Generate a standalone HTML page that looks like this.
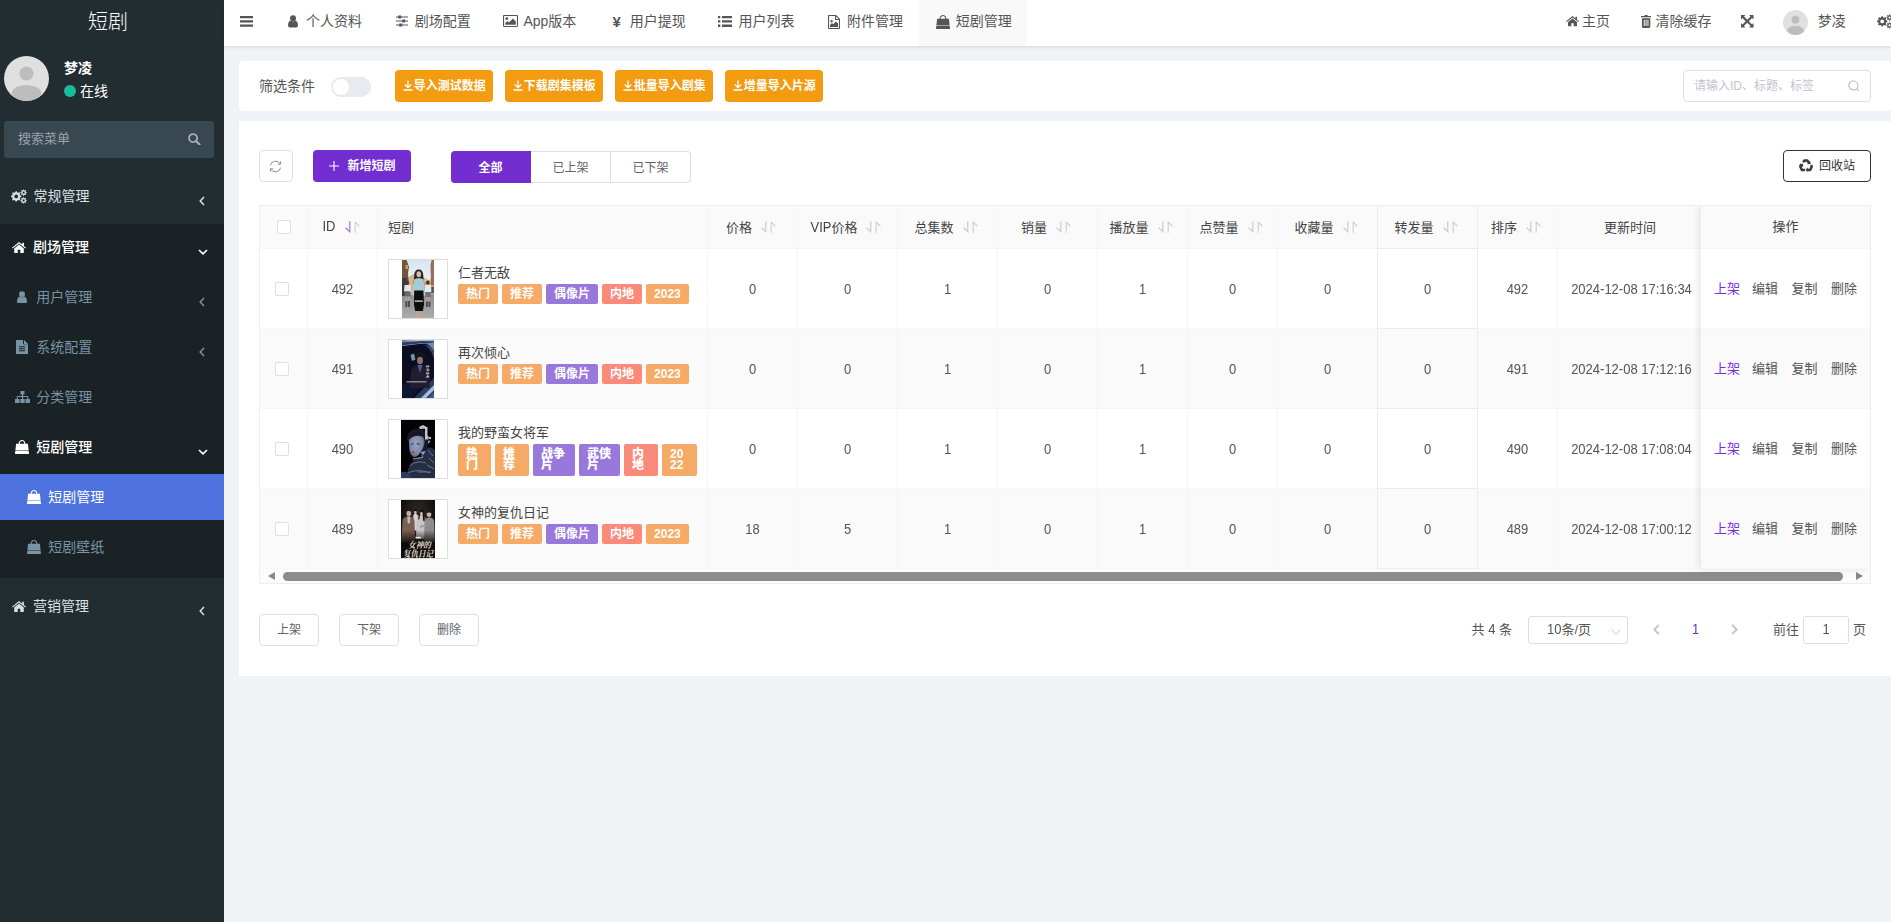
<!DOCTYPE html>
<html lang="zh-CN">
<head>
<meta charset="utf-8">
<title>短剧</title>
<style>
*{box-sizing:border-box;margin:0;padding:0}
html,body{width:1891px;height:922px;overflow:hidden}
body{font-family:"Liberation Sans","Noto Sans CJK SC",sans-serif;font-size:14px;color:#555;background:#f0f3f6;position:relative}
svg{display:block}
/* sidebar */
#side{position:absolute;left:0;top:0;width:224px;height:922px;background:#222d32;color:#d8e0e4}
#logo{position:absolute;left:0;top:0;width:216px;height:46px;line-height:44px;text-align:center;font-size:20px;color:#fff;font-weight:300}
#avatar{position:absolute;left:4px;top:56px;width:45px;height:45px}
#uname{position:absolute;left:64px;top:58px;font-size:14px;font-weight:bold;color:#fff;line-height:20px}
#ustat{position:absolute;left:64px;top:81px;font-size:14px;color:#fff;line-height:20px}
#ustat i{display:inline-block;width:12px;height:12px;border-radius:50%;background:#18bc9c;vertical-align:-1px;margin-right:4px}
#sform{position:absolute;left:4px;top:121px;width:210px;height:37px;border-radius:3px;background:#374850;color:#9aa3a8;font-size:13px;line-height:36px;padding-left:14px}
#sform .sic{position:absolute;left:184px;top:11.500px;color:#a8adb0}
.mi{position:absolute;left:0;width:224px;height:46px;line-height:47px;font-size:14px;white-space:nowrap}
.mi .ic{position:absolute;top:0;height:46px;display:flex;align-items:center}
.mi .tx{position:absolute;top:0}
.mi .ar{position:absolute;top:0;height:46px;display:flex;align-items:center}
.mi.sub{color:#7893a3}
.mi.on,.mi.on2{color:#fff;font-weight:500}
.mi.on2{font-weight:normal}
#dark{position:absolute;left:0;top:224px;width:224px;height:354px;background:#1a2226}
#blue{position:absolute;left:0;top:474px;width:224px;height:46px;background:#4e73df}
/* header */
#head{position:absolute;left:224px;top:0;width:1667px;height:46px;background:#fff;box-shadow:0 1px 3px rgba(0,21,41,.13);color:#555}
.tab{position:absolute;top:0;height:46px;line-height:43px;font-size:14px;white-space:nowrap}
.tab .fi{position:absolute;left:15px;top:0;width:18px;height:46px;display:flex;align-items:center;justify-content:center;padding-bottom:3px}
.tab .tt{position:absolute;left:37px;top:0}
.yen{font-size:15px;font-weight:bold;line-height:1}
#tabon{position:absolute;left:695px;top:0;width:108px;height:46px;background:#f9f9f9}
.hi{position:absolute;top:0;height:43px;display:flex;align-items:center}
.ht{position:absolute;top:0;line-height:43px;white-space:nowrap}
/* cards */
.card{position:absolute;background:#fff}
.obtn{position:absolute;top:9px;width:98px;height:32px;border-radius:4px;background:#f39c12;color:#fff;font-size:12px;font-weight:bold;line-height:33px;white-space:nowrap}
.obtn svg{position:absolute;left:8px;top:10px}
.obtn span{position:absolute;left:18.800px;top:0}
.flabel{position:absolute;left:20px;top:0;line-height:51px;font-size:14px;color:#555}
.sw{position:absolute;left:92px;top:16px;width:40px;height:20px;border-radius:10px;background:#e8eaef;border:1px solid #e8eaef}
.sw i{position:absolute;left:1px;top:1px;width:16px;height:16px;border-radius:50%;background:#fff}
.sinput{position:absolute;left:1444px;top:9px;width:188px;height:32px;border:1px solid #dcdfe6;border-radius:4px;font-size:12px;color:#c0c4cc;line-height:30px;padding-left:10px;white-space:nowrap}
.sinput svg{position:absolute;left:164px;top:9px}
.rbtn{position:absolute;left:20px;top:29px;width:34px;height:32px;border:1px solid #dcdfe6;border-radius:4px}
.rbtn svg{position:absolute;left:9px;top:9px}
.pbtn{position:absolute;left:74px;top:29px;width:98px;height:32px;border-radius:4px;background:#722ed1;color:#fff;font-size:12px;font-weight:bold;line-height:33px;white-space:nowrap}
.pbtn svg{position:absolute;left:16px;top:11px}
.pbtn span{position:absolute;left:34.500px;top:0}
.rg{position:absolute;left:212px;top:30px;width:240px;height:32px;font-size:12px;white-space:nowrap}
.rg span{position:absolute;top:0;width:80px;height:32px;line-height:32px;text-align:center;color:#606266;border:1px solid #dcdfe6;border-left:0;background:#fff}
.rg span.on{background:#722ed1;color:#fff;font-weight:bold;border-color:#722ed1;border-radius:4px 0 0 4px;line-height:33px}
.rg span.last{border-radius:0 4px 4px 0}
.recy{position:absolute;left:1544px;top:29px;width:88px;height:32px;border:1px solid #333;border-radius:4px;font-size:12px;color:#333;line-height:30px;white-space:nowrap}
.recy svg{position:absolute;left:15px;top:8px}
.recy span{position:absolute;left:35px;top:0}
#tb{position:absolute;left:20px;top:84px;width:1612px;height:379px;border:1px solid #ebeef5;overflow:hidden;font-size:13px;color:#555}
.tr{position:absolute;left:0;width:1610px;background:#fff}
.tr.th,.tr.st,.fr.th,.fr.st{background:#fafafa}
.td{position:absolute;top:0;height:100%;padding-top:1px;border-right:1px solid #f5f5f7;border-bottom:1px solid #f6f6f8;display:flex;align-items:center;justify-content:center;white-space:nowrap}
.td.l{justify-content:flex-start}
.th .td{color:#444;padding-bottom:2px;padding-right:3px}
.th .td.l{padding-right:0}
.td.hl{border-right-color:#e9ecf5;border-bottom-color:#e9ecf5;box-shadow:-1px 0 0 #e9ecf5}
.so{margin-left:9px;margin-top:1px}
.cb{display:block;width:14px;height:14px;border:1px solid #dcdfe6;border-radius:2px;background:#fff}
.pic{position:absolute;left:10px;top:10px;width:60px;height:60px;border:1px solid #ddd;background:#fff;display:flex;justify-content:center;align-items:center}
.ttl{position:absolute;left:80px;top:15px;line-height:18px;font-size:13px;color:#444}
.tags{position:absolute;left:80px;top:35px;display:flex}
.tag{display:block;height:20px;line-height:21px;padding:0 8px;margin-right:4px;border-radius:2px;color:#fff;font-size:12px;font-weight:bold}
.tag.w{height:32px;line-height:11px;padding:5px 0 0 8px;margin-right:4px}
.tag.w b{display:block}
.to{background:#f5aa67}.tp{background:#9878db}.ts{background:#fa8a7a}
.sbar{position:absolute;left:0;top:363px;width:1610px;height:14px;background:#fcfcfc}
.sbar .thumb{position:absolute;left:23px;top:3px;width:1560px;height:9px;border-radius:5px;background:#8c8c8c}
.sbar .al{position:absolute;left:8px;top:3px;border:4.500px solid transparent;border-right:7.500px solid #888;border-left:0}
.sbar .arr{position:absolute;left:1596px;top:3px;border:4.500px solid transparent;border-left:7.500px solid #888;border-right:0}
#fx{position:absolute;left:1441px;top:0;width:169px;height:363px;box-shadow:-2px 0 8px rgba(0,0,0,.10);background:#fff}
.fr{position:absolute;left:0;width:169px;background:#fff;border-bottom:1px solid #f6f6f8;font-size:13px}
.fr .c{position:absolute;left:0;width:169px;text-align:center;line-height:42px;color:#444}
.fr a{position:absolute;top:0;line-height:79px;color:#555}
.fr a.p{color:#7433d6}
.bbtn{position:absolute;top:493px;width:60px;height:32px;border:1px solid #dcdfe6;border-radius:4px;font-size:12px;color:#606266;text-align:center;line-height:30px}
.pg{position:absolute;left:0;top:495px;width:1652px;height:28px;font-size:13px;color:#555}
.pt{position:absolute;top:0;line-height:27px;white-space:nowrap}
.psel{position:absolute;top:0;width:100px;height:28px;border:1px solid #dcdfe6;border-radius:3px;line-height:26px}
.psel>span{position:absolute;left:18px;top:0}
.psel svg{position:absolute;left:82px;top:12px}
.pa{position:absolute;top:8px}
.pn{position:absolute;top:0;width:30px;text-align:center;line-height:27px;color:#722ed1}
.pin{position:absolute;top:0;width:46px;height:28px;border:1px solid #dcdfe6;border-radius:3px;text-align:center;line-height:26px}
.n{display:inline-block;transform:scaleY(1.1);transform-origin:50% 58%}

</style>
</head>
<body>

<div id="side">
<div id="dark"></div><div id="blue"></div>
<div id="logo">短剧</div>
<div id="avatar"><svg width="45" height="45" viewBox="0 0 45 45"><circle cx="22.500" cy="22.500" r="22.500" fill="#e0e0e0"/><circle cx="22.500" cy="17.500" r="7" fill="#bdbdbd"/><path d="M7.500 38.500c0-6 6-9.500 15-9.500s15 3.500 15 9.500c-4 4-9 6.500-15 6.500s-11-2.500-15-6.500z" fill="#bdbdbd"/></svg></div>
<div id="uname">梦凌</div>
<div id="ustat"><i></i>在线</div>
<div id="sform">搜索菜单<span class="sic"><svg width="12.5" height="12.5" viewBox="0 0 13 13" style=""><circle cx="5.300" cy="5.300" r="4.200" fill="none" stroke="currentColor" stroke-width="1.900"/><path d="M8.300 8.300l3.700 3.700" stroke="currentColor" stroke-width="2.200" stroke-linecap="round"/></svg></span></div>
<div class="mi " style="top:173px"><span class="ic" style="left:11px"><svg width="16" height="15.0" viewBox="0 0 16 15" style=""><path fill-rule="evenodd" fill="currentColor" d="M10.37 6.83 L10.37 7.97 L9.01 8.61 L8.75 9.24 L9.26 10.65 L8.45 11.46 L7.04 10.95 L6.41 11.21 L5.77 12.57 L4.63 12.57 L3.99 11.21 L3.36 10.95 L1.95 11.46 L1.14 10.65 L1.65 9.24 L1.39 8.61 L0.03 7.97 L0.03 6.83 L1.39 6.19 L1.65 5.56 L1.14 4.15 L1.95 3.34 L3.36 3.85 L3.99 3.59 L4.63 2.23 L5.77 2.23 L6.41 3.59 L7.04 3.85 L8.45 3.34 L9.26 4.15 L8.75 5.56 L9.01 6.19Z M3.30 7.40 a1.90 1.90 0 1 0 3.80 0 a1.90 1.90 0 1 0 -3.80 0Z M15.78 3.25 L15.78 3.95 L14.79 4.29 L14.64 4.66 L15.10 5.60 L14.60 6.10 L13.66 5.64 L13.29 5.79 L12.95 6.78 L12.25 6.78 L11.91 5.79 L11.54 5.64 L10.60 6.10 L10.10 5.60 L10.56 4.66 L10.41 4.29 L9.42 3.95 L9.42 3.25 L10.41 2.91 L10.56 2.54 L10.10 1.60 L10.60 1.10 L11.54 1.56 L11.91 1.41 L12.25 0.42 L12.95 0.42 L13.29 1.41 L13.66 1.56 L14.60 1.10 L15.10 1.60 L14.64 2.54 L14.79 2.91Z M11.50 3.60 a1.10 1.10 0 1 0 2.20 0 a1.10 1.10 0 1 0 -2.20 0Z M15.78 11.05 L15.78 11.75 L14.79 12.09 L14.64 12.46 L15.10 13.40 L14.60 13.90 L13.66 13.44 L13.29 13.59 L12.95 14.58 L12.25 14.58 L11.91 13.59 L11.54 13.44 L10.60 13.90 L10.10 13.40 L10.56 12.46 L10.41 12.09 L9.42 11.75 L9.42 11.05 L10.41 10.71 L10.56 10.34 L10.10 9.40 L10.60 8.90 L11.54 9.36 L11.91 9.21 L12.25 8.22 L12.95 8.22 L13.29 9.21 L13.66 9.36 L14.60 8.90 L15.10 9.40 L14.64 10.34 L14.79 10.71Z M11.50 11.40 a1.10 1.10 0 1 0 2.20 0 a1.10 1.10 0 1 0 -2.20 0Z"/></svg></span><span class="tx" style="left:33.5px">常规管理</span><span class="ar" style="left:199px;padding-top:9px"><svg width="6" height="10" viewBox="0 0 6 10" style=""><path d="M5 1L1.200 5 5 9" fill="none" stroke="currentColor" stroke-width="1.500"/></svg></span></div>
<div class="mi on" style="top:224px"><span class="ic" style="left:12px"><svg width="14" height="11.0" viewBox="0 0 14 11" style=""><path fill="currentColor" d="M7 0L0 5.700l.7.900L7 1.500l6.300 5.100.7-.9-2.100-1.700V.7h-1.700v1.900z"/><path fill="currentColor" d="M7 2.600L2.200 6.500v4c0 .3.200.5.500.5h3V7.700h2.600V11h3c.3 0 .5-.2.500-.5v-4z"/></svg></span><span class="tx" style="left:33px">剧场管理</span><span class="ar" style="left:198px;padding-top:9px"><svg width="10" height="6" viewBox="0 0 10 6" style=""><path d="M1 1l4 3.800L9 1" fill="none" stroke="currentColor" stroke-width="1.700"/></svg></span></div>
<div class="mi sub" style="top:274px"><span class="ic" style="left:17px"><svg width="10.0" height="12.5" viewBox="0 0 10 12.5" style=""><circle cx="5" cy="3.300" r="3" fill="currentColor"/><path d="M0 10.600c0-3.200 1.200-5 2.800-5.200.6.600 1.300.9 2.200.9s1.600-.3 2.200-.9c1.600.2 2.800 2 2.800 5.200 0 1.100-.8 1.900-1.800 1.900H1.800C.8 12.500 0 11.700 0 10.600z" fill="currentColor"/></svg></span><span class="tx" style="left:36.2px">用户管理</span><span class="ar" style="left:199px;padding-top:9px"><svg width="6" height="10" viewBox="0 0 6 10" style=""><path d="M5 1L1.200 5 5 9" fill="none" stroke="currentColor" stroke-width="1.500"/></svg></span></div>
<div class="mi sub" style="top:324px"><span class="ic" style="left:16px"><svg width="12.0" height="14" viewBox="0 0 12 14" style=""><path fill-rule="evenodd" fill="currentColor" d="M0 .6C0 .3.300 0 .6 0H7v3.600c0 .4.300.7.700.7H12v9.100c0 .3-.3.600-.6.600H.6c-.3 0-.6-.3-.6-.6zM8 0.100c.2.100.4.200.5.300l3.100 3.100c.1.100.2.300.3.500H8zM3 6.200h6v1H3zM3 8.200h6v1H3zM3 10.200h6v1H3z"/></svg></span><span class="tx" style="left:36.2px">系统配置</span><span class="ar" style="left:199px;padding-top:9px"><svg width="6" height="10" viewBox="0 0 6 10" style=""><path d="M5 1L1.200 5 5 9" fill="none" stroke="currentColor" stroke-width="1.500"/></svg></span></div>
<div class="mi sub" style="top:374px"><span class="ic" style="left:14.5px"><svg width="15" height="12.0" viewBox="0 0 15 12" style=""><path fill="currentColor" d="M5.500 0h4v3.500h-1.400v1.500h4.400c.4 0 .8.300.8.800V8h1.700v4h-4.500V8h1.700V6.100H8.100V8h1.600v4H5.300V8h1.700V6.100H2.800V8h1.700v4H0V8h1.700V5.800c0-.5.400-.8.800-.8h4.400V3.500H5.500z"/></svg></span><span class="tx" style="left:36.2px">分类管理</span></div>
<div class="mi on" style="top:424px"><span class="ic" style="left:15px"><svg width="14" height="14" viewBox="0 0 14 14" style=""><path fill-rule="evenodd" fill="currentColor" d="M3.700 3.800V3.300C3.700 1.500 5.200 0 7 0s3.300 1.500 3.300 3.300v.5h2.600l.75 6.700H.35l.75-6.700zM4.800 3.800h4.400V3.300C9.200 2.100 8.200 1.100 7 1.100S4.800 2.100 4.800 3.300zM.3 11h13.400l.3 2.400c0 .3-.2.600-.6.600H.6c-.4 0-.6-.3-.6-.6z"/></svg></span><span class="tx" style="left:36.2px">短剧管理</span><span class="ar" style="left:198px;padding-top:9px"><svg width="10" height="6" viewBox="0 0 10 6" style=""><path d="M1 1l4 3.800L9 1" fill="none" stroke="currentColor" stroke-width="1.700"/></svg></span></div>
<div class="mi on2" style="top:474px"><span class="ic" style="left:27px"><svg width="14" height="14" viewBox="0 0 14 14" style=""><path fill-rule="evenodd" fill="currentColor" d="M3.700 3.800V3.300C3.700 1.500 5.200 0 7 0s3.300 1.500 3.300 3.300v.5h2.600l.75 6.700H.35l.75-6.700zM4.800 3.800h4.400V3.300C9.200 2.100 8.200 1.100 7 1.100S4.800 2.100 4.800 3.300zM.3 11h13.400l.3 2.400c0 .3-.2.600-.6.600H.6c-.4 0-.6-.3-.6-.6z"/></svg></span><span class="tx" style="left:48.2px">短剧管理</span></div>
<div class="mi sub" style="top:524px"><span class="ic" style="left:27px"><svg width="14" height="14" viewBox="0 0 14 14" style=""><path fill-rule="evenodd" fill="currentColor" d="M3.700 3.800V3.300C3.700 1.500 5.200 0 7 0s3.300 1.500 3.300 3.300v.5h2.600l.75 6.700H.35l.75-6.700zM4.800 3.800h4.400V3.300C9.200 2.100 8.200 1.100 7 1.100S4.800 2.100 4.800 3.300zM.3 11h13.400l.3 2.400c0 .3-.2.600-.6.600H.6c-.4 0-.6-.3-.6-.6z"/></svg></span><span class="tx" style="left:48.2px">短剧壁纸</span></div>
<div class="mi " style="top:583px"><span class="ic" style="left:12px"><svg width="14" height="11.0" viewBox="0 0 14 11" style=""><path fill="currentColor" d="M7 0L0 5.700l.7.900L7 1.500l6.300 5.100.7-.9-2.100-1.700V.7h-1.700v1.900z"/><path fill="currentColor" d="M7 2.600L2.200 6.500v4c0 .3.200.5.500.5h3V7.700h2.600V11h3c.3 0 .5-.2.500-.5v-4z"/></svg></span><span class="tx" style="left:33px">营销管理</span><span class="ar" style="left:199px;padding-top:9px"><svg width="6" height="10" viewBox="0 0 6 10" style=""><path d="M5 1L1.200 5 5 9" fill="none" stroke="currentColor" stroke-width="1.500"/></svg></span></div>
</div>
<div id="head">
<div id="tabon"></div>
<span class="hi" style="left:16px"><svg width="13" height="11" viewBox="0 0 13 11" style=""><path fill="currentColor" d="M0 0h13v2.200H0zM0 4.300h13v2.200H0zM0 8.600h13v2.200H0z"/></svg></span>
<div class="tab" style="left:45px"><span class="fi"><svg width="10.0" height="12.5" viewBox="0 0 10 12.5" style=""><circle cx="5" cy="3.300" r="3" fill="currentColor"/><path d="M0 10.600c0-3.200 1.200-5 2.800-5.200.6.600 1.300.9 2.200.9s1.600-.3 2.200-.9c1.600.2 2.800 2 2.800 5.200 0 1.100-.8 1.900-1.800 1.900H1.800C.8 12.500 0 11.700 0 10.600z" fill="currentColor"/></svg></span><span class="tt">个人资料</span></div>
<div class="tab" style="left:153.7px"><span class="fi"><span style="margin-top:-1px"><svg width="12" height="12" viewBox="0 0 12 12" style=""><path fill="currentColor" d="M0 1.400h2.200V.6h3v.8H12v1.200H5.200v.8h-3v-.8H0zM0 5.400h6.200v-.8h3v.8H12v1.200H9.200v.8h-3v-.8H0zM0 9.400h3.200v-.8h3v.8H12v1.200H6.200v.8h-3v-.8H0z"/></svg></span></span><span class="tt">剧场配置</span></div>
<div class="tab" style="left:262.4px"><span class="fi"><span style="margin-top:-2px"><svg width="15" height="12.0" viewBox="0 0 15 12" style=""><path fill-rule="evenodd" fill="currentColor" d="M1.200 0h12.600c.7 0 1.200.5 1.200 1.200v9.600c0 .7-.5 1.200-1.200 1.200H1.200C.5 12 0 11.500 0 10.800V1.200C0 .5.500 0 1.200 0zM1.100 1.100v9.800h12.800V1.100zM3.800 2.300a1.400 1.400 0 1 1 0 2.800 1.400 1.400 0 0 1 0-2.800zM2.200 9.800V8.200l2.300-2.300 1.500 1.500 3.900-3.900 2.900 2.900v3.400z"/></svg></span></span><span class="tt">App版本</span></div>
<div class="tab" style="left:368.7px"><span class="fi"><b class="yen">¥</b></span><span class="tt">用户提现</span></div>
<div class="tab" style="left:477.4px"><span class="fi"><svg width="14" height="11.0" viewBox="0 0 14 11" style=""><path fill="currentColor" d="M0 0h2.300v2.300H0zM4 0h10v2.300H4zM0 4.300h2.300v2.300H0zM4 4.300h10v2.300H4zM0 8.600h2.300v2.300H0zM4 8.600h10v2.300H4z"/></svg></span><span class="tt">用户列表</span></div>
<div class="tab" style="left:586.1px"><span class="fi"><svg width="12.0" height="14" viewBox="0 0 12 14" style=""><path fill-rule="evenodd" fill="currentColor" d="M.7 0h7.400l3.900 3.900v9.400c0 .4-.3.700-.7.700H.7c-.4 0-.7-.3-.7-.7V.7C0 .3.300 0 .7 0zM1.100 1.100v11.800h9.800V5H7.500c-.3 0-.5-.2-.5-.5V1.100zM8.100 1.600V3.900h2.300zM2 12V10l2-2 1.200 1.200L8 6.400l2 2V12zM3.600 5a1.200 1.200 0 1 1 0 2.400 1.200 1.200 0 0 1 0-2.400z"/></svg></span><span class="tt">附件管理</span></div>
<div class="tab" style="left:694.8px"><span class="fi"><svg width="14" height="14" viewBox="0 0 14 14" style=""><path fill-rule="evenodd" fill="currentColor" d="M3.700 3.800V3.300C3.700 1.500 5.200 0 7 0s3.300 1.500 3.300 3.300v.5h2.600l.75 6.700H.35l.75-6.700zM4.800 3.800h4.400V3.300C9.200 2.100 8.200 1.100 7 1.100S4.800 2.100 4.800 3.300zM.3 11h13.400l.3 2.400c0 .3-.2.600-.6.600H.6c-.4 0-.6-.3-.6-.6z"/></svg></span><span class="tt">短剧管理</span></div>
<span class="hi" style="left:1342px"><svg width="13" height="10.214285714285714" viewBox="0 0 14 11" style=""><path fill="currentColor" d="M7 0L0 5.700l.7.900L7 1.500l6.300 5.100.7-.9-2.100-1.700V.7h-1.700v1.900z"/><path fill="currentColor" d="M7 2.600L2.200 6.500v4c0 .3.200.5.500.5h3V7.700h2.600V11h3c.3 0 .5-.2.500-.5v-4z"/></svg></span><span class="ht" style="left:1358px">主页</span>
<span class="hi" style="left:1416.5px"><svg width="10.214285714285714" height="13" viewBox="0 0 11 14" style=""><path fill-rule="evenodd" fill="currentColor" d="M3.500 1.200L4 .2C4.100.1 4.200 0 4.400 0h2.200c.2 0 .3.100.4.200l.5 1H10.700c.2 0 .3.100.3.300v.7c0 .2-.1.300-.3.300H.3C.1 2.500 0 2.400 0 2.200v-.7c0-.2.100-.3.300-.3zM1 3.400h9v9.300c0 .7-.6 1.300-1.300 1.300H2.300C1.600 14 1 13.400 1 12.700zM3 5.200v6.600h1V5.200zM5 5.200v6.600h1V5.200zM7 5.200v6.600h1V5.200z"/></svg></span><span class="ht" style="left:1431.4px">清除缓存</span>
<span class="hi" style="left:1517px"><svg width="12.5" height="12.5" viewBox="0 0 13 13" style=""><path fill="currentColor" d="M0 0h4.600L3.100 1.500 6.500 4.900 9.900 1.500 8.400 0H13v4.600L11.500 3.100 8.100 6.500l3.400 3.400L13 8.400V13H8.400l1.500-1.500L6.500 8.100 3.100 11.500 4.600 13H0V8.400l1.500 1.500L4.900 6.500 1.500 3.100 0 4.600z"/></svg></span>
<span class="hi" style="left:1559px;padding-top:2px"><svg width="25" height="25" viewBox="0 0 45 45"><circle cx="22.500" cy="22.500" r="22.500" fill="#e0e0e0"/><circle cx="22.500" cy="17.500" r="7" fill="#bdbdbd"/><path d="M7.500 38.500c0-6 6-9.500 15-9.500s15 3.500 15 9.500c-4 4-9 6.500-15 6.500s-11-2.500-15-6.500z" fill="#bdbdbd"/></svg></span><span class="ht" style="left:1593.8px">梦凌</span>
<span class="hi" style="left:1652.5px"><svg width="16" height="15.0" viewBox="0 0 16 15" style=""><path fill-rule="evenodd" fill="currentColor" d="M10.37 6.83 L10.37 7.97 L9.01 8.61 L8.75 9.24 L9.26 10.65 L8.45 11.46 L7.04 10.95 L6.41 11.21 L5.77 12.57 L4.63 12.57 L3.99 11.21 L3.36 10.95 L1.95 11.46 L1.14 10.65 L1.65 9.24 L1.39 8.61 L0.03 7.97 L0.03 6.83 L1.39 6.19 L1.65 5.56 L1.14 4.15 L1.95 3.34 L3.36 3.85 L3.99 3.59 L4.63 2.23 L5.77 2.23 L6.41 3.59 L7.04 3.85 L8.45 3.34 L9.26 4.15 L8.75 5.56 L9.01 6.19Z M3.30 7.40 a1.90 1.90 0 1 0 3.80 0 a1.90 1.90 0 1 0 -3.80 0Z M15.78 3.25 L15.78 3.95 L14.79 4.29 L14.64 4.66 L15.10 5.60 L14.60 6.10 L13.66 5.64 L13.29 5.79 L12.95 6.78 L12.25 6.78 L11.91 5.79 L11.54 5.64 L10.60 6.10 L10.10 5.60 L10.56 4.66 L10.41 4.29 L9.42 3.95 L9.42 3.25 L10.41 2.91 L10.56 2.54 L10.10 1.60 L10.60 1.10 L11.54 1.56 L11.91 1.41 L12.25 0.42 L12.95 0.42 L13.29 1.41 L13.66 1.56 L14.60 1.10 L15.10 1.60 L14.64 2.54 L14.79 2.91Z M11.50 3.60 a1.10 1.10 0 1 0 2.20 0 a1.10 1.10 0 1 0 -2.20 0Z M15.78 11.05 L15.78 11.75 L14.79 12.09 L14.64 12.46 L15.10 13.40 L14.60 13.90 L13.66 13.44 L13.29 13.59 L12.95 14.58 L12.25 14.58 L11.91 13.59 L11.54 13.44 L10.60 13.90 L10.10 13.40 L10.56 12.46 L10.41 12.09 L9.42 11.75 L9.42 11.05 L10.41 10.71 L10.56 10.34 L10.10 9.40 L10.60 8.90 L11.54 9.36 L11.91 9.21 L12.25 8.22 L12.95 8.22 L13.29 9.21 L13.66 9.36 L14.60 8.90 L15.10 9.40 L14.64 10.34 L14.79 10.71Z M11.50 11.40 a1.10 1.10 0 1 0 2.20 0 a1.10 1.10 0 1 0 -2.20 0Z"/></svg></span>
</div>
<div class="card" id="c1" style="left:239px;top:61px;width:1652px;height:50px;border-radius:4px">
<span class="flabel">筛选条件</span><span class="sw"><i></i></span>
<div class="obtn" style="left:156px"><svg width="10" height="11" viewBox="0 0 10 11" style=""><path d="M5 .5v6.800M1.800 4.500L5 7.600l3.200-3.100M.5 10h9" fill="none" stroke="#fff" stroke-width="1.300"/></svg><span>导入测试数据</span></div>
<div class="obtn" style="left:266px"><svg width="10" height="11" viewBox="0 0 10 11" style=""><path d="M5 .5v6.800M1.800 4.500L5 7.600l3.200-3.100M.5 10h9" fill="none" stroke="#fff" stroke-width="1.300"/></svg><span>下载剧集模板</span></div>
<div class="obtn" style="left:376px"><svg width="10" height="11" viewBox="0 0 10 11" style=""><path d="M5 .5v6.800M1.800 4.500L5 7.600l3.200-3.100M.5 10h9" fill="none" stroke="#fff" stroke-width="1.300"/></svg><span>批量导入剧集</span></div>
<div class="obtn" style="left:486px"><svg width="10" height="11" viewBox="0 0 10 11" style=""><path d="M5 .5v6.800M1.800 4.500L5 7.600l3.200-3.100M.5 10h9" fill="none" stroke="#fff" stroke-width="1.300"/></svg><span>增量导入片源</span></div>
<div class="sinput"><span>请输入ID、标题、标签</span><svg width="12" height="12" viewBox="0 0 12 12" style=""><circle cx="5.400" cy="5.400" r="4.500" fill="none" stroke="#c0c4cc" stroke-width="1.300"/><path d="M8.700 8.700l2.100 2.100" stroke="#c0c4cc" stroke-width="1.300"/></svg></div>
</div>
<div class="card" id="c2" style="left:239px;top:121px;width:1652px;height:555px">
<div class="rbtn"><svg width="13" height="13" viewBox="0 0 13 13" style=""><path d="M1.300 5.400A5.400 5.400 0 0 1 11.300 3.900M11.700 7.600A5.400 5.400 0 0 1 1.700 9.100" fill="none" stroke="#8a8d93" stroke-width="1"/><path d="M11.600 1.300v2.900H8.700M1.400 11.700V8.800h2.900" fill="none" stroke="#8a8d93" stroke-width="1"/></svg></div>
<div class="pbtn"><svg width="10" height="10" viewBox="0 0 10 10" style=""><path d="M5 0v10M0 5h10" stroke="#fff" stroke-width="1.100"/></svg><span>新增短剧</span></div>
<div class="rg"><span class="on" style="left:0">全部</span><span style="left:80px">已上架</span><span class="last" style="left:160px">已下架</span></div>
<div class="recy"><svg width="14" height="12.5" viewBox="0 0 14 12.5" style=""><g fill="none" stroke="#3a3a3a" stroke-width="2.500" stroke-linejoin="round"><path d="M4.200 3.200L5.400 1.400H8.300L10.200 4.400"/><path d="M12.100 6L12.700 7.400 11.200 10.900H8.300"/><path d="M5.900 10.900H2.800L1.300 7.400 2.500 5.200"/></g><path fill="#3a3a3a" d="M8.200 5.300l3.600-.3-1-3.400zM8.800 8.600v4.400L6.300 10.800zM.2 5.900l3.700-1.500.3 3.600z"/></svg><span>回收站</span></div>
<div id="tb">
<div class="tr th" style="top:0;height:43px">
<div class="td l" style="left:0px;width:48px;"><i class="cb" style="margin-left:17px"></i></div>
<div class="td " style="left:48px;width:70px;"><span><span class="n">ID</span></span><span class="so"><svg width="15" height="12" viewBox="0 0 15 12" style=""><path d="M4.800 .2v10.600L.6 6.800" fill="none" stroke="#a374e6" stroke-width="1.200"/><path d="M10.200 11.800V1.200l4.200 4" fill="none" stroke="#cdd1d9" stroke-width="1.200"/></svg></span></div>
<div class="td l" style="left:118px;width:330px;"><span style="padding-left:10px">短剧</span></div>
<div class="td " style="left:448px;width:90px;"><span>价格</span><span class="so"><svg width="15" height="12" viewBox="0 0 15 12" style=""><path d="M4.800 .2v10.600L.6 6.800" fill="none" stroke="#c8ccd4" stroke-width="1.200"/><path d="M10.200 11.800V1.200l4.200 4" fill="none" stroke="#cdd1d9" stroke-width="1.200"/></svg></span></div>
<div class="td " style="left:538px;width:100px;"><span><span class="n">VIP</span>价格</span><span class="so"><svg width="15" height="12" viewBox="0 0 15 12" style=""><path d="M4.800 .2v10.600L.6 6.800" fill="none" stroke="#c8ccd4" stroke-width="1.200"/><path d="M10.200 11.800V1.200l4.200 4" fill="none" stroke="#cdd1d9" stroke-width="1.200"/></svg></span></div>
<div class="td " style="left:638px;width:100px;"><span>总集数</span><span class="so"><svg width="15" height="12" viewBox="0 0 15 12" style=""><path d="M4.800 .2v10.600L.6 6.800" fill="none" stroke="#c8ccd4" stroke-width="1.200"/><path d="M10.200 11.800V1.200l4.200 4" fill="none" stroke="#cdd1d9" stroke-width="1.200"/></svg></span></div>
<div class="td " style="left:738px;width:100px;"><span>销量</span><span class="so"><svg width="15" height="12" viewBox="0 0 15 12" style=""><path d="M4.800 .2v10.600L.6 6.800" fill="none" stroke="#c8ccd4" stroke-width="1.200"/><path d="M10.200 11.800V1.200l4.200 4" fill="none" stroke="#cdd1d9" stroke-width="1.200"/></svg></span></div>
<div class="td " style="left:838px;width:90px;"><span>播放量</span><span class="so"><svg width="15" height="12" viewBox="0 0 15 12" style=""><path d="M4.800 .2v10.600L.6 6.800" fill="none" stroke="#c8ccd4" stroke-width="1.200"/><path d="M10.200 11.800V1.200l4.200 4" fill="none" stroke="#cdd1d9" stroke-width="1.200"/></svg></span></div>
<div class="td " style="left:928px;width:90px;"><span>点赞量</span><span class="so"><svg width="15" height="12" viewBox="0 0 15 12" style=""><path d="M4.800 .2v10.600L.6 6.800" fill="none" stroke="#c8ccd4" stroke-width="1.200"/><path d="M10.200 11.800V1.200l4.200 4" fill="none" stroke="#cdd1d9" stroke-width="1.200"/></svg></span></div>
<div class="td " style="left:1018px;width:100px;"><span>收藏量</span><span class="so"><svg width="15" height="12" viewBox="0 0 15 12" style=""><path d="M4.800 .2v10.600L.6 6.800" fill="none" stroke="#c8ccd4" stroke-width="1.200"/><path d="M10.200 11.800V1.200l4.200 4" fill="none" stroke="#cdd1d9" stroke-width="1.200"/></svg></span></div>
<div class="td hl" style="left:1118px;width:100px;"><span>转发量</span><span class="so"><svg width="15" height="12" viewBox="0 0 15 12" style=""><path d="M4.800 .2v10.600L.6 6.800" fill="none" stroke="#c8ccd4" stroke-width="1.200"/><path d="M10.200 11.800V1.200l4.200 4" fill="none" stroke="#cdd1d9" stroke-width="1.200"/></svg></span></div>
<div class="td " style="left:1218px;width:80px;"><span>排序</span><span class="so"><svg width="15" height="12" viewBox="0 0 15 12" style=""><path d="M4.800 .2v10.600L.6 6.800" fill="none" stroke="#c8ccd4" stroke-width="1.200"/><path d="M10.200 11.800V1.200l4.200 4" fill="none" stroke="#cdd1d9" stroke-width="1.200"/></svg></span></div>
<div class="td " style="left:1298px;width:148px;"><span>更新时间</span></div>
</div>
<div class="tr " style="top:43px;height:80px">
<div class="td l" style="left:0px;width:48px;"><i class="cb" style="margin-left:15px"></i></div>
<div class="td " style="left:48px;width:70px;"><span class="n">492</span></div>
<div class="td l" style="left:118px;width:330px;"><div class="pic"><svg width="32" height="58" viewBox="0 0 32 58"><defs><linearGradient id="p1s" x1="0" y1="0" x2="0" y2="1"><stop offset="0" stop-color="#d5e4f1"/><stop offset="1" stop-color="#f1f5f7"/></linearGradient><linearGradient id="p1g" x1="0" y1="0" x2="0" y2="1"><stop offset="0" stop-color="#8f8f92"/><stop offset="1" stop-color="#adadaf"/></linearGradient><filter id="b1" x="-10%" y="-10%" width="120%" height="120%"><feGaussianBlur stdDeviation=".45"/></filter></defs><rect width="32" height="58" fill="#a2a2a4"/><g filter="url(#b1)"><rect x="-2" y="-2" width="36" height="30" fill="url(#p1s)"/><rect x="-2" y="34" width="36" height="26" fill="url(#p1g)"/><path d="M5 18l7-4 8 2 6 4 6-2v17H5z" fill="#d8b58c"/><path d="M22 22h10v13H22z" fill="#c99a78"/><path d="M-2 -2h6l3 9-1 6 1 13v10h-9z" fill="#6e5440"/><rect x="3.500" y="5" width="2.500" height="4" fill="#c9a53a"/><path d="M-1 18h6v18h-7z" fill="#3c3a3a"/><path d="M34 -2h-4l-1.500 7 .5 20h5z" fill="#9b6d58"/><rect x="29" y="27" width="3" height="6" fill="#4a5a78"/><ellipse cx="5.500" cy="22.500" rx="1.600" ry="1.900" fill="#4a3c36"/><path d="M2.500 25h6l.5 6.500h-7z" fill="#e4e6e8"/><path d="M2.800 31.500h5.600l.3 5H2.500z" fill="#5f6c7e"/><path d="M3.600 36.500h1.500v6H3.600zM6.200 36.500h1.500v6H6.200z" fill="#b9a496"/><path d="M3.400 41h1.900v6H3.400zM6 41h1.900v6H6z" fill="#4a4a4c"/><ellipse cx="25.800" cy="22.500" rx="1.600" ry="1.900" fill="#3a302c"/><path d="M23 25h6l.4 7h-6.800z" fill="#e6e7e9"/><path d="M23.500 32h5.200l.3 5h-5.800z" fill="#6a7280"/><path d="M24.200 37h1.400v5h-1.400zM26.800 37h1.400v5h-1.400z" fill="#b9a496"/><path d="M24 41.500h1.800v5.500H24zM26.600 41.500h1.800v5.500h-1.800z" fill="#46464a"/><path d="M12.300 15c0-3.500 2-5.500 4.500-5.500s4.400 2 4.400 5.500l.8 9h-2l-1-5h-4.500l-1 5h-2z" fill="#2a2523"/><ellipse cx="16.800" cy="14.300" rx="2.300" ry="3" fill="#dcbcaa"/><path d="M12 19.500c1.500-1 3-1.300 4.800-1.300s3.500.3 4.800 1.300l1.700 16-1.800.5-1-7v2.500h-7.400V29l-1 7-1.800-.5z" fill="#a6cbd7"/><path d="M12.200 30.500h9.200l.6 14-1.200 6.500h-7.600L12 44.500z" fill="#0b0c0f"/><rect x="12.800" y="40.300" width="8" height="1.700" fill="#a8a8a4"/><path d="M14.200 51h1.900v7h-1.900zM17.300 51h1.900v7h-1.900z" fill="#c6a48e"/></g></svg></div><div class="ttl">仁者无敌</div><div class="tags"><span class="tag to">热门</span><span class="tag to">推荐</span><span class="tag tp">偶像片</span><span class="tag ts">内地</span><span class="tag to">2023</span></div></div>
<div class="td " style="left:448px;width:90px;"><span class="n">0</span></div>
<div class="td " style="left:538px;width:100px;"><span class="n">0</span></div>
<div class="td " style="left:638px;width:100px;"><span class="n">1</span></div>
<div class="td " style="left:738px;width:100px;"><span class="n">0</span></div>
<div class="td " style="left:838px;width:90px;"><span class="n">1</span></div>
<div class="td " style="left:928px;width:90px;"><span class="n">0</span></div>
<div class="td " style="left:1018px;width:100px;"><span class="n">0</span></div>
<div class="td hl" style="left:1118px;width:100px;"><span class="n">0</span></div>
<div class="td " style="left:1218px;width:80px;"><span class="n">492</span></div>
<div class="td " style="left:1298px;width:148px;"><span class="n">2024-12-08 17:16:34</span></div>
</div>
<div class="tr st" style="top:123px;height:80px">
<div class="td l" style="left:0px;width:48px;"><i class="cb" style="margin-left:15px"></i></div>
<div class="td " style="left:48px;width:70px;"><span class="n">491</span></div>
<div class="td l" style="left:118px;width:330px;"><div class="pic"><svg width="32" height="58" viewBox="0 0 32 58"><defs><linearGradient id="p2t" x1="0" y1="0" x2="1" y2="0"><stop offset="0" stop-color="#5f769c"/><stop offset=".55" stop-color="#b9c7da"/><stop offset="1" stop-color="#8499b8"/></linearGradient><filter id="b2" x="-10%" y="-10%" width="120%" height="120%"><feGaussianBlur stdDeviation=".7"/></filter></defs><rect width="32" height="58" fill="#0c1224"/><g filter="url(#b2)"><rect x="-2" y="-2" width="36" height="62" fill="#0b1020"/><path d="M-2 -2h36v5L16 4-2 6.500z" fill="url(#p2t)"/><path d="M-2 2.500L20 1l14 .5v1.500L18 3.500-2 5.500z" fill="#2a3c5c"/><path d="M24 3.500c5 2 8 7 10 13V2z" fill="#7489aa"/><path d="M22 5c5 2 8 7 10 14l2 3V14c-2-5-6-9-12-9z" fill="#34486a"/><path d="M8.500 15l3.500-1.500 1.500 6-3.500 1.500z" fill="#6f96a8"/><path d="M-2 46l10-4 12 4L8 60H-2z" fill="#0f1932"/><path d="M34 36L10 60h24z" fill="#2c4166"/><path d="M34 43L17 60h5l12-12z" fill="#a9bad2"/><path d="M34 50L25 60h9z" fill="#435c88"/><path d="M9 31c1.500-4.500 5-6.500 9-6.500s7.500 2 9 6.500l1 17H8z" fill="#231b2d"/><path d="M15.500 25l2.500 8 2.500-8z" fill="#4c6385"/><ellipse cx="18" cy="20.300" rx="3" ry="3.900" fill="#8d756f"/><path d="M12.800 18.500c-.3-4 2.300-6.500 5.400-6.500s5.800 2.500 5.300 6.500c-2.500-2-7.500-2.300-10.700 0z" fill="#14121b"/><rect x="16.400" y="22.300" width="1.800" height=".8" fill="#a8456a"/><rect x="24" y="25.500" width="3.300" height="1.800" fill="#a9acb8"/><rect x="24.500" y="28.500" width="2.800" height="2.800" fill="#8d92a2"/><rect x="24" y="32.500" width="3.300" height="1.800" fill="#a9acb8"/><path d="M23.500 37.500l2.300-2.800 2 2.800z" fill="#b6b9c2"/><rect x="4.500" y="41.200" width="20" height="1.200" fill="#9aa0b0"/></g></svg></div><div class="ttl">再次倾心</div><div class="tags"><span class="tag to">热门</span><span class="tag to">推荐</span><span class="tag tp">偶像片</span><span class="tag ts">内地</span><span class="tag to">2023</span></div></div>
<div class="td " style="left:448px;width:90px;"><span class="n">0</span></div>
<div class="td " style="left:538px;width:100px;"><span class="n">0</span></div>
<div class="td " style="left:638px;width:100px;"><span class="n">1</span></div>
<div class="td " style="left:738px;width:100px;"><span class="n">0</span></div>
<div class="td " style="left:838px;width:90px;"><span class="n">1</span></div>
<div class="td " style="left:928px;width:90px;"><span class="n">0</span></div>
<div class="td " style="left:1018px;width:100px;"><span class="n">0</span></div>
<div class="td hl" style="left:1118px;width:100px;"><span class="n">0</span></div>
<div class="td " style="left:1218px;width:80px;"><span class="n">491</span></div>
<div class="td " style="left:1298px;width:148px;"><span class="n">2024-12-08 17:12:16</span></div>
</div>
<div class="tr " style="top:203px;height:80px">
<div class="td l" style="left:0px;width:48px;"><i class="cb" style="margin-left:15px"></i></div>
<div class="td " style="left:48px;width:70px;"><span class="n">490</span></div>
<div class="td l" style="left:118px;width:330px;"><div class="pic"><svg width="34" height="58" viewBox="0 0 34 58"><defs><radialGradient id="p3f" cx=".45" cy=".45" r=".6"><stop offset="0" stop-color="#98a5c0"/><stop offset=".7" stop-color="#7a87a6"/><stop offset="1" stop-color="#4a546e"/></radialGradient><filter id="b3" x="-10%" y="-10%" width="120%" height="120%"><feGaussianBlur stdDeviation=".55"/></filter></defs><rect width="34" height="58" fill="#030306"/><g filter="url(#b3)"><path d="M6 20c0-8 5-11 11-11s10 4 10 11l-1 10-4 4-10-6z" fill="#151b2b"/><path d="M8 21c0-5 3-8 7.500-8s8 3 8 8c0 4-1.500 8-4 11.500-1.500 2.500-4 4.500-6 4.500s-4-2.500-4.800-6C8.300 28 8 24 8 21z" fill="url(#p3f)"/><path d="M7 21c.5-6 4-9 9-9 4 0 7 2 8 6-3-2-6-2.500-9-2-3 .5-5.500 2-8 5z" fill="#121724"/><path d="M9.500 24.300l3.300-.6M15.500 23.800l3.600.4" stroke="#2a2f44" stroke-width=".9"/><rect x="10.800" y="31.500" width="3.200" height="1.500" rx=".6" fill="#c2351f"/><path d="M20 32l6-1.500 1 6-6 2z" fill="#7fa0cf"/><path d="M19 33.500l7 4" stroke="#0a0c14" stroke-width="1"/><path d="M26 28c3-1 6 0 8 2v28H6c0-8 2-13 6-17 3-2 6-3 9-3z" fill="#262f45"/><path d="M12 39l10-1.500M9 46c4-4 10-5 16-3M7 53c6-3 14-3 22 0M27 30l5 6M28 38l5 5M26 45l7 4" stroke="#6c7488" stroke-width="1" fill="none"/><path d="M12 39l9-1.500" stroke="#8b8672" stroke-width="1.200"/><path d="M0 52c4-1 8 0 10 3v3H0z" fill="#2c3a5c"/><path d="M18 7l4-2 3 1.500-1 2-5 .5zM24 7h2.500v9H24zM24 16h3.500v3.500H24zM28 17h2v2h-2zM27.500 20.500l2 .5-2.500 3z" fill="#c0c4cc"/><rect x="17" y="51.500" width="13" height="1" fill="#6a7080"/></g></svg></div><div class="ttl">我的野蛮女将军</div><div class="tags"><span class="tag w to" style="width:33px"><b>热</b><b>门</b></span><span class="tag w to" style="width:34px"><b>推</b><b>荐</b></span><span class="tag w tp" style="width:42px"><b>战争</b><b>片</b></span><span class="tag w tp" style="width:41px"><b>武侠</b><b>片</b></span><span class="tag w ts" style="width:34px"><b>内</b><b>地</b></span><span class="tag w to" style="width:35px"><b>20</b><b>22</b></span></div></div>
<div class="td " style="left:448px;width:90px;"><span class="n">0</span></div>
<div class="td " style="left:538px;width:100px;"><span class="n">0</span></div>
<div class="td " style="left:638px;width:100px;"><span class="n">1</span></div>
<div class="td " style="left:738px;width:100px;"><span class="n">0</span></div>
<div class="td " style="left:838px;width:90px;"><span class="n">1</span></div>
<div class="td " style="left:928px;width:90px;"><span class="n">0</span></div>
<div class="td " style="left:1018px;width:100px;"><span class="n">0</span></div>
<div class="td hl" style="left:1118px;width:100px;"><span class="n">0</span></div>
<div class="td " style="left:1218px;width:80px;"><span class="n">490</span></div>
<div class="td " style="left:1298px;width:148px;"><span class="n">2024-12-08 17:08:04</span></div>
</div>
<div class="tr st" style="top:283px;height:80px">
<div class="td l" style="left:0px;width:48px;"><i class="cb" style="margin-left:15px"></i></div>
<div class="td " style="left:48px;width:70px;"><span class="n">489</span></div>
<div class="td l" style="left:118px;width:330px;"><div class="pic"><svg width="34" height="58" viewBox="0 0 34 58"><defs><radialGradient id="p4b" cx=".5" cy=".32" r=".55"><stop offset="0" stop-color="#35302d"/><stop offset="1" stop-color="#100e0d"/></radialGradient><linearGradient id="p4f" x1="0" y1="0" x2="0" y2="1"><stop offset="0" stop-color="#100e0d" stop-opacity="0"/><stop offset="1" stop-color="#100e0d"/></linearGradient><filter id="b4" x="-10%" y="-10%" width="120%" height="120%"><feGaussianBlur stdDeviation=".45"/></filter></defs><rect width="34" height="58" fill="url(#p4b)"/><g filter="url(#b4)"><path d="M12.300 15.500c0-1 1-2 2.200-2s2.200 1 2.200 2l.8 15h-6z" fill="#d9d1cd"/><ellipse cx="14.400" cy="11.600" rx="1.800" ry="2.400" fill="#d8b9a6"/><path d="M12.400 11c0-3.200 4.200-3.200 4.200 0l.2 3.500h-.9l-.2-3c-.8-.8-1.800-.8-2.600 0l-.2 3h-.8z" fill="#1b1513"/><path d="M15.500 19c0-2 2-4 4.500-4s4.500 2 4.500 4l.5 20h-10z" fill="#c9c5c5"/><ellipse cx="20.800" cy="12.600" rx="2" ry="2.600" fill="#e2c6b4"/><path d="M18.500 12c0-3.600 4.800-3.600 4.800 0l.6 9c-1 .5-1.800 0-1.900-1l-.4-7.500c-.8-.8-1.800-.8-2.400 0l-.6 6c-.2 1-1 1.300-1.500.8z" fill="#19130f"/><path d="M1.500 21c0-3 2.500-4.500 6-4.500s6 1.500 6 4.500l.8 21h-14z" fill="#7a6151"/><path d="M6.300 16.500h3l-.3 6-1.200 1.500-1.200-1.500z" fill="#b4bcc4"/><ellipse cx="7.800" cy="13.300" rx="2.300" ry="2.900" fill="#cba996"/><path d="M4.600 11.800c1.500-1.200 5-1.200 6.500 0l-.5-2c-1-1.400-4.500-1.400-5.500 0z" fill="#1d1714"/><path d="M5.300 10.300l2.500-1.800 2.600 1.800z" fill="#2a221e"/><path d="M23.500 22c0-3 2-4.500 4.800-4.500s5 1.500 5 4.500l.5 20h-10.800z" fill="#8f8b8d"/><ellipse cx="28" cy="14" rx="2.300" ry="2.900" fill="#d3b39f"/><path d="M25.600 13.300c0-3.600 5-3.600 5 0-1.500-1-3.500-1-5 0z" fill="#1b1513"/><path d="M19 26l6-2 .5 1.500-6 2.500z" fill="#9c989a"/><rect x="-2" y="30" width="38" height="14" fill="url(#p4f)"/><rect x="-2" y="43.500" width="38" height="16" fill="#100e0d"/><rect x="14.500" y="36.800" width="5.500" height="1.600" fill="#e6e2e0"/></g><text x="18.500" y="47.800" font-family="Liberation Serif,Noto Serif CJK SC,serif" font-size="8.500" font-weight="bold" font-style="italic" fill="#ecdcd0" text-anchor="middle" textLength="23" lengthAdjust="spacingAndGlyphs">女神的</text><text x="17" y="56.500" font-family="Liberation Serif,Noto Serif CJK SC,serif" font-size="9" font-weight="bold" font-style="italic" fill="#ecdcd0" text-anchor="middle" textLength="30" lengthAdjust="spacingAndGlyphs">复仇日记</text></svg></div><div class="ttl">女神的复仇日记</div><div class="tags"><span class="tag to">热门</span><span class="tag to">推荐</span><span class="tag tp">偶像片</span><span class="tag ts">内地</span><span class="tag to">2023</span></div></div>
<div class="td " style="left:448px;width:90px;"><span class="n">18</span></div>
<div class="td " style="left:538px;width:100px;"><span class="n">5</span></div>
<div class="td " style="left:638px;width:100px;"><span class="n">1</span></div>
<div class="td " style="left:738px;width:100px;"><span class="n">0</span></div>
<div class="td " style="left:838px;width:90px;"><span class="n">1</span></div>
<div class="td " style="left:928px;width:90px;"><span class="n">0</span></div>
<div class="td " style="left:1018px;width:100px;"><span class="n">0</span></div>
<div class="td hl" style="left:1118px;width:100px;"><span class="n">0</span></div>
<div class="td " style="left:1218px;width:80px;"><span class="n">489</span></div>
<div class="td " style="left:1298px;width:148px;"><span class="n">2024-12-08 17:00:12</span></div>
</div>
<div class="sbar"><i class="al"></i><i class="thumb"></i><i class="arr"></i></div>
<div id="fx">
<div class="fr th" style="top:0;height:43px"><span class="c">操作</span></div>
<div class="fr " style="top:43px;height:80px"><a class="p" style="left:13px">上架</a><a style="left:51px">编辑</a><a style="left:90.500px">复制</a><a style="left:130px">删除</a></div>
<div class="fr st" style="top:123px;height:80px"><a class="p" style="left:13px">上架</a><a style="left:51px">编辑</a><a style="left:90.500px">复制</a><a style="left:130px">删除</a></div>
<div class="fr " style="top:203px;height:80px"><a class="p" style="left:13px">上架</a><a style="left:51px">编辑</a><a style="left:90.500px">复制</a><a style="left:130px">删除</a></div>
<div class="fr st" style="top:283px;height:80px"><a class="p" style="left:13px">上架</a><a style="left:51px">编辑</a><a style="left:90.500px">复制</a><a style="left:130px">删除</a></div>
</div>
</div>
<div class="bbtn" style="left:20px">上架</div>
<div class="bbtn" style="left:100px">下架</div>
<div class="bbtn" style="left:180px">删除</div>
<div class="pg">
<span class="pt" style="left:1232.500px">共 <span class="n">4</span> 条</span>
<div class="psel" style="left:1289px"><span><span class="n">10</span>条/页</span><svg width="10" height="6" viewBox="0 0 10 6" style=""><path d="M.6 .8L5 5.200 9.400 .8" fill="none" stroke="#c0c4cc" stroke-width="1"/></svg></div>
<span class="pa" style="left:1414px"><svg width="7" height="11" viewBox="0 0 7 11" style=""><path d="M5.800 1L1.300 5.500 5.800 10" fill="none" stroke="#c3c7cf" stroke-width="1.900"/></svg></span>
<span class="pn" style="left:1441.500px"><span class="n">1</span></span>
<span class="pa" style="left:1492px"><svg width="7" height="11" viewBox="0 0 7 11" style=""><path d="M1.200 1l4.500 4.500L1.200 10" fill="none" stroke="#c3c7cf" stroke-width="1.900"/></svg></span>
<span class="pt" style="left:1534px">前往</span>
<div class="pin" style="left:1564px"><span class="n">1</span></div>
<span class="pt" style="left:1614px">页</span>
</div>
</div>

</body>
</html>
